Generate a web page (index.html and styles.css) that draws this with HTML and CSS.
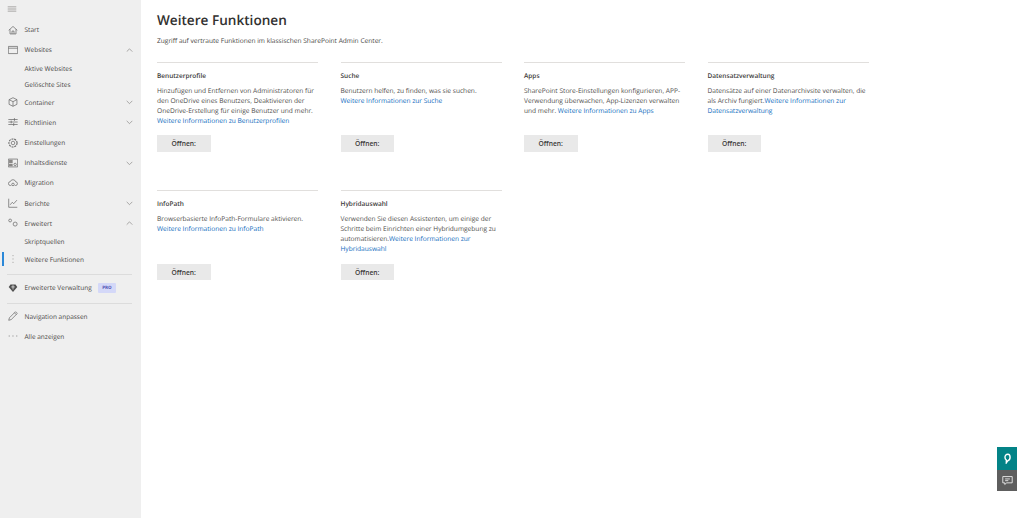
FILE: index.html
```html
<!DOCTYPE html>
<html lang="de">
<head>
<meta charset="utf-8">
<title>Weitere Funktionen</title>
<link rel="stylesheet" href="styles.css">
</head>
<body>
<div class="app">
<nav class="nav">
  <div class="burger"><svg class="ic" viewBox="0 0 14 14"><path d="M1 4h12M1 7h12M1 10h12"/></svg></div>
  <a class="row"><svg class="ic" viewBox="0 0 14 14"><path d="M1 7.500 7 2l6 5.500M2.800 6v6.500h8.400V6M5.600 12.500V8.500h2.800v4"/></svg><span>Start</span></a>
  <a class="row"><svg class="ic" viewBox="0 0 14 14"><path d="M.5 2h13v10H.5zM.5 4.500h13"/></svg><span>Websites</span><svg class="chev" viewBox="0 0 10 6"><path d="M1 5l4-4 4 4"/></svg></a>
  <a class="sub"><span>Aktive Websites</span></a>
  <a class="sub"><span>Gelöschte Sites</span></a>
  <a class="row"><svg class="ic" viewBox="0 0 14 14"><path d="M7 1 12.500 3.700v6.600L7 13l-5.500-2.700V3.700zM1.500 3.700 7 6.500l5.500-2.800M7 6.500V13"/></svg><span>Container</span><svg class="chev" viewBox="0 0 10 6"><path d="M1 1l4 4 4-4"/></svg></a>
  <a class="row"><svg class="ic" viewBox="0 0 14 14"><path d="M.5 3.500h13M.5 7h13M.5 10.500h13M9 1.500v4M4.500 5v4M8 8.500v4"/></svg><span>Richtlinien</span><svg class="chev" viewBox="0 0 10 6"><path d="M1 1l4 4 4-4"/></svg></a>
  <a class="row"><svg class="ic" viewBox="0 0 14 14"><circle cx="7" cy="7" r="2.500"/><circle cx="7" cy="7" r="5.700" stroke-dasharray="2.800 1.200" stroke-width="1.500"/></svg><span>Einstellungen</span></a>
  <a class="row"><svg class="ic" viewBox="0 0 14 14"><path d="M.5 1.500h13v11H.5z"/><path class="fill" d="M1.500 2.500h5v4.500h-5zM1.500 8h5v3.500h-5z"/><circle cx="10" cy="9" r="1.700"/></svg><span>Inhaltsdienste</span><svg class="chev" viewBox="0 0 10 6"><path d="M1 1l4 4 4-4"/></svg></a>
  <a class="row"><svg class="ic" viewBox="0 0 14 14"><path d="M4.500 10.500H3.500a2.700 2.700 0 0 1-.3-5.400 3.900 3.900 0 0 1 7.500.2 2.600 2.600 0 0 1-.2 5.200H9.500"/><circle cx="7" cy="9" r="1.800"/></svg><span>Migration</span></a>
  <a class="row"><svg class="ic" viewBox="0 0 14 14"><path d="M1 1v12h12M3 9.500l3-3.500 2 2 4.500-5"/></svg><span>Berichte</span><svg class="chev" viewBox="0 0 10 6"><path d="M1 1l4 4 4-4"/></svg></a>
  <a class="row"><svg class="ic" viewBox="0 0 14 14"><circle cx="3" cy="3.500" r="2"/><circle cx="10" cy="8.500" r="2.800"/></svg><span>Erweitert</span><svg class="chev" viewBox="0 0 10 6"><path d="M1 5l4-4 4 4"/></svg></a>
  <a class="sub"><span>Skriptquellen</span></a>
  <a class="sub active"><svg class="ic dots" viewBox="0 0 14 14"><path d="M7 1.500v1.500M7 6.200v1.500M7 11v1.500"/></svg><span>Weitere Funktionen</span></a>
  <hr class="sep sep-a">
  <a class="row"><svg class="ic solid" viewBox="0 0 14 14"><path d="M3.500 2h7l2.500 3.500-6 7-6-7z"/><path class="cut" d="M4.500 5.500h5M7 3v6"/></svg><span>Erweiterte Verwaltung</span><b class="pro">PRO</b></a>
  <hr class="sep sep-b">
  <a class="row"><svg class="ic" viewBox="0 0 14 14"><path d="M1 13l1-3.500L10.500 1l2.500 2.500L4.500 12zM9 2.500 11.500 5"/></svg><span>Navigation anpassen</span></a>
  <a class="row"><svg class="ic" viewBox="0 0 14 14"><path d="M1 7h1.500M6.200 7h1.500M11.500 7H13"/></svg><span>Alle anzeigen</span></a>
</nav>
<main class="main">
  <h1>Weitere Funktionen</h1>
  <p class="lead">Zugriff auf vertraute Funktionen im klassischen SharePoint Admin Center.</p>
  <div class="grid">
    <section class="card">
      <h2>Benutzerprofile</h2>
      <p>Hinzufügen und Entfernen von Administratoren für den OneDrive eines Benutzers, Deaktivieren der OneDrive-Erstellung für einige Benutzer und mehr. <a href="#">Weitere Informationen zu Benutzerprofilen</a></p>
      <button>Öffnen:</button>
    </section>
    <section class="card">
      <h2>Suche</h2>
      <p>Benutzern helfen, zu finden, was sie suchen. <a href="#">Weitere Informationen zur Suche</a></p>
      <button>Öffnen:</button>
    </section>
    <section class="card">
      <h2>Apps</h2>
      <p>SharePoint Store-Einstellungen konfigurieren, APP-Verwendung überwachen, App-Lizenzen verwalten und mehr. <a href="#">Weitere Informationen zu Apps</a></p>
      <button>Öffnen:</button>
    </section>
    <section class="card">
      <h2>Datensatzverwaltung</h2>
      <p>Datensätze auf einer Datenarchivsite verwalten, die als Archiv fungiert.<a href="#">Weitere Informationen zur Datensatzverwaltung</a></p>
      <button>Öffnen:</button>
    </section>
    <section class="card">
      <h2>InfoPath</h2>
      <p>Browserbasierte InfoPath-Formulare aktivieren. <a href="#">Weitere Informationen zu InfoPath</a></p>
      <button>Öffnen:</button>
    </section>
    <section class="card">
      <h2>Hybridauswahl</h2>
      <p>Verwenden Sie diesen Assistenten, um einige der Schritte beim Einrichten einer Hybridumgebung zu automatisieren.<a href="#">Weitere Informationen zur Hybridauswahl</a></p>
      <button>Öffnen:</button>
    </section>
  </div>
</main>
</div>
<div class="float">
  <div class="fl fl-teal"><svg viewBox="0 0 14 14"><path d="M7.500 1.500C5 1.500 3.800 3.300 3.800 5.500c0 1.600.7 2.800 1.700 3.400V12.500l2-2.700c1.800-.4 2.800-2.200 2.800-4.300 0-2.200-1-4-2.800-4z"/></svg></div>
  <div class="fl fl-grey"><svg class="line" viewBox="0 0 14 14"><path d="M1 2h12v8H6l-2.500 2v-2H1zM4 5h6M4 7.200h4"/></svg></div>
</div>
</body>
</html>
```
FILE: styles.css
```css
* { box-sizing: border-box; }
html, body { margin: 0; height: 100%; }
body {
  font-family: "Open Sans", "Noto Sans", "Liberation Sans", sans-serif;
  color: #323130;
  background: #fff;
  overflow: hidden;
  text-rendering: geometricPrecision;
}
.app { display: flex; height: 518px; }
.nav {
  width: 141px;
  flex: none;
  background: #efefef;
  padding-top: 2px;
  font-size: 6.500px;
  color: #484644;
}
.burger { height: 14px; display: flex; align-items: center; padding-left: 7px; margin-bottom: 3.700px; }
.burger .ic { stroke: #8a8886; width: 10px; height: 10px; }
.row, .sub {
  display: flex;
  align-items: center;
  height: 20.200px;
  padding-left: 7.500px;
  position: relative;
}
.sub { height: 16px; padding-left: 24.500px; }
.ic {
  width: 10px;
  height: 10px;
  flex: none;
  margin-right: 7px;
  fill: none;
  stroke: #666;
  stroke-width: 1;
}
.ic .fill { fill: #8a8886; stroke: none; }
.ic.solid path:first-child { fill: #505050; stroke: none; }
.ic .cut { stroke: #efefef; }
.chev {
  width: 7px;
  height: 4.500px;
  position: absolute;
  right: 8px;
  top: 8px;
  fill: none;
  stroke: #8a8886;
  stroke-width: 1;
}
.sub.active { height: 20px; }
.active .dots { position: absolute; left: 7.500px; top: 5px; margin: 0; stroke: #8a8886; }
.active::before {
  content: "";
  position: absolute;
  left: 2px;
  top: 3px;
  width: 2px;
  height: 14px;
  background: #2b88d8;
}
.sep { border: 0; border-top: 1px solid #dcdcdc; margin: 0 9px 0 7px; }
.sep-a { margin-top: 5px; margin-bottom: 2.500px; }
.sep-b { margin-top: 4.500px; margin-bottom: 2.500px; }
.pro {
  margin-left: 6.500px;
  background: #d4d8f8;
  color: #4f52b2;
  font-size: 4.500px;
  font-weight: 700;
  padding: 2px 4px;
  border-radius: 1px;
}
.main { flex: 1; padding: 10px 0 0 16px; min-width: 0; }
h1 {
  margin: 0;
  font-size: 13.600px;
  line-height: 20px;
  font-weight: 600;
  color: #323130;
}
.lead { margin: 6px 0 0; font-size: 6.600px; line-height: 10px; color: #484644; }
.grid {
  display: grid;
  grid-template-columns: repeat(4, 161px);
  column-gap: 22.500px;
  grid-auto-rows: 128.400px;
  margin-top: 16px;
}
.card { border-top: 1px solid #e1dfdd; padding-top: 8px; display: flex; flex-direction: column; align-items: flex-start; }
h2 { margin: 0; font-size: 6.500px; line-height: 10px; font-weight: 600; color: #3b3a39; }
.card p { margin: 5px 0 0; font-size: 6.600px; line-height: 10px; color: #4f4e4c; width: 161px; }
.card a { color: #0f6cbd; text-decoration: none; }
.card button {
  margin-top: auto;
  margin-bottom: 38.500px;
  width: 53.500px;
  height: 16.500px;
  background: #e9e9e9;
  border: 0;
  padding: 0;
  font: 600 6.700px "Open Sans", "Noto Sans", sans-serif;
  color: #3b3a39;
}
.float { position: fixed; left: 997px; top: 447px; width: 20px; }
.fl { display: flex; align-items: center; justify-content: center; }
.fl svg { width: 11px; height: 11px; }
.fl-teal { height: 23px; background: #038387; }
.fl-teal svg { fill: none; stroke: #fff; stroke-width: 1.800; }
.fl-grey { height: 21px; background: #5e5e5e; }
.fl-grey svg { fill: none; stroke: #fff; stroke-width: 1; }
```
